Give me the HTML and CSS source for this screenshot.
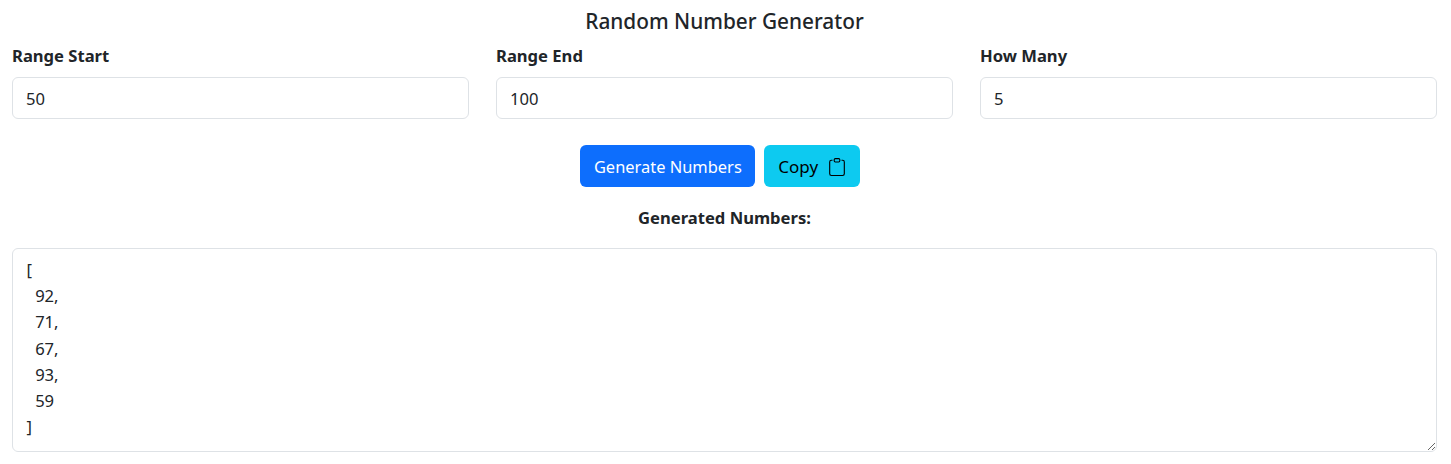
FILE: index.html
```html
<!DOCTYPE html>
<html lang="en">
<head>
<meta charset="utf-8">
<title>Random Number Generator</title>
<link rel="stylesheet" href="styles.css">
</head>
<body>
<main class="page">
  <h1 class="title">Random Number Generator</h1>
  <div class="fields">
    <div class="field"><label class="label" for="start">Range Start</label><input class="control" id="start" type="text" value="50"></div>
    <div class="field"><label class="label" for="end">Range End</label><input class="control" id="end" type="text" value="100"></div>
    <div class="field"><label class="label" for="count">How Many</label><input class="control" id="count" type="text" value="5"></div>
  </div>
  <div class="actions">
    <button class="btn btn-primary" type="button">Generate Numbers</button>
    <button class="btn btn-info" type="button">Copy
      <svg class="icon" viewBox="0 0 16 16" width="18" height="18" fill="currentColor" aria-hidden="true"><path d="M4 1.5H3a2 2 0 0 0-2 2V14a2 2 0 0 0 2 2h10a2 2 0 0 0 2-2V3.5a2 2 0 0 0-2-2h-1v1h1a1 1 0 0 1 1 1V14a1 1 0 0 1-1 1H3a1 1 0 0 1-1-1V3.5a1 1 0 0 1 1-1h1z"/><path d="M9.5 1a.5.5 0 0 1 .5.5v1a.5.5 0 0 1-.5.5h-3a.5.5 0 0 1-.5-.5v-1a.5.5 0 0 1 .5-.5zm-3-1A1.500 1.500 0 0 0 5 1.500v1A1.500 1.500 0 0 0 6.500 4h3A1.500 1.500 0 0 0 11 2.500v-1A1.500 1.500 0 0 0 9.500 0z"/></svg>
    </button>
  </div>
  <h2 class="result-title">Generated Numbers:</h2>
  <textarea class="control output" rows="7">[
  92,
  71,
  67,
  93,
  59
]</textarea>
</main>
</body>
</html>
```
FILE: styles.css
```css
* { box-sizing: border-box; }
html, body { margin: 0; background: #fff; }
body {
  font-family: "Noto Sans", "Open Sans", sans-serif;
  font-size: 16.6px;
  color: #212529;
}
.page { padding: 8px 14px 0 12px; display: flex; flex-direction: column; }
.title {
  margin: 0 0 8px;
  text-align: center;
  font-size: 20.8px;
  font-weight: 500;
  line-height: 27px;
}
.fields { display: grid; grid-template-columns: repeat(3, 1fr); column-gap: 27px; }
.field { display: flex; flex-direction: column; }
.label { font-weight: 700; font-size: 16.6px; line-height: 26px; margin-bottom: 8px; }
.control {
  font: inherit;
  color: #212529;
  line-height: 26.17px;
  border: 1px solid #dee2e6;
  border-radius: 6px;
  padding: 7px 13px;
  height: 42px;
  width: 100%;
  background: #fff;
  outline: none;
}
.actions { display: flex; justify-content: center; margin-top: 26px; }
.btn {
  font: inherit;
  font-size: 16.45px;
  height: 42px;
  margin-right: 9px;
  padding: 1px 14px 0;
  border: 0;
  border-radius: 6px;
  display: inline-flex;
  align-items: center;
  gap: 9.5px;
}
.btn-primary { background: #0d6efd; color: #fff; padding: 1px 13.5px 0; }
.btn-info { background: #0dcaf0; color: #000; font-size: 17px; }
.result-title {
  margin: 18px 0 17px;
  text-align: center;
  font-size: 16.6px;
  font-weight: 700;
  line-height: 26px;
}
.output { height: 204px; padding: 8px 13.5px; resize: vertical; white-space: pre; overflow: hidden; }
```
